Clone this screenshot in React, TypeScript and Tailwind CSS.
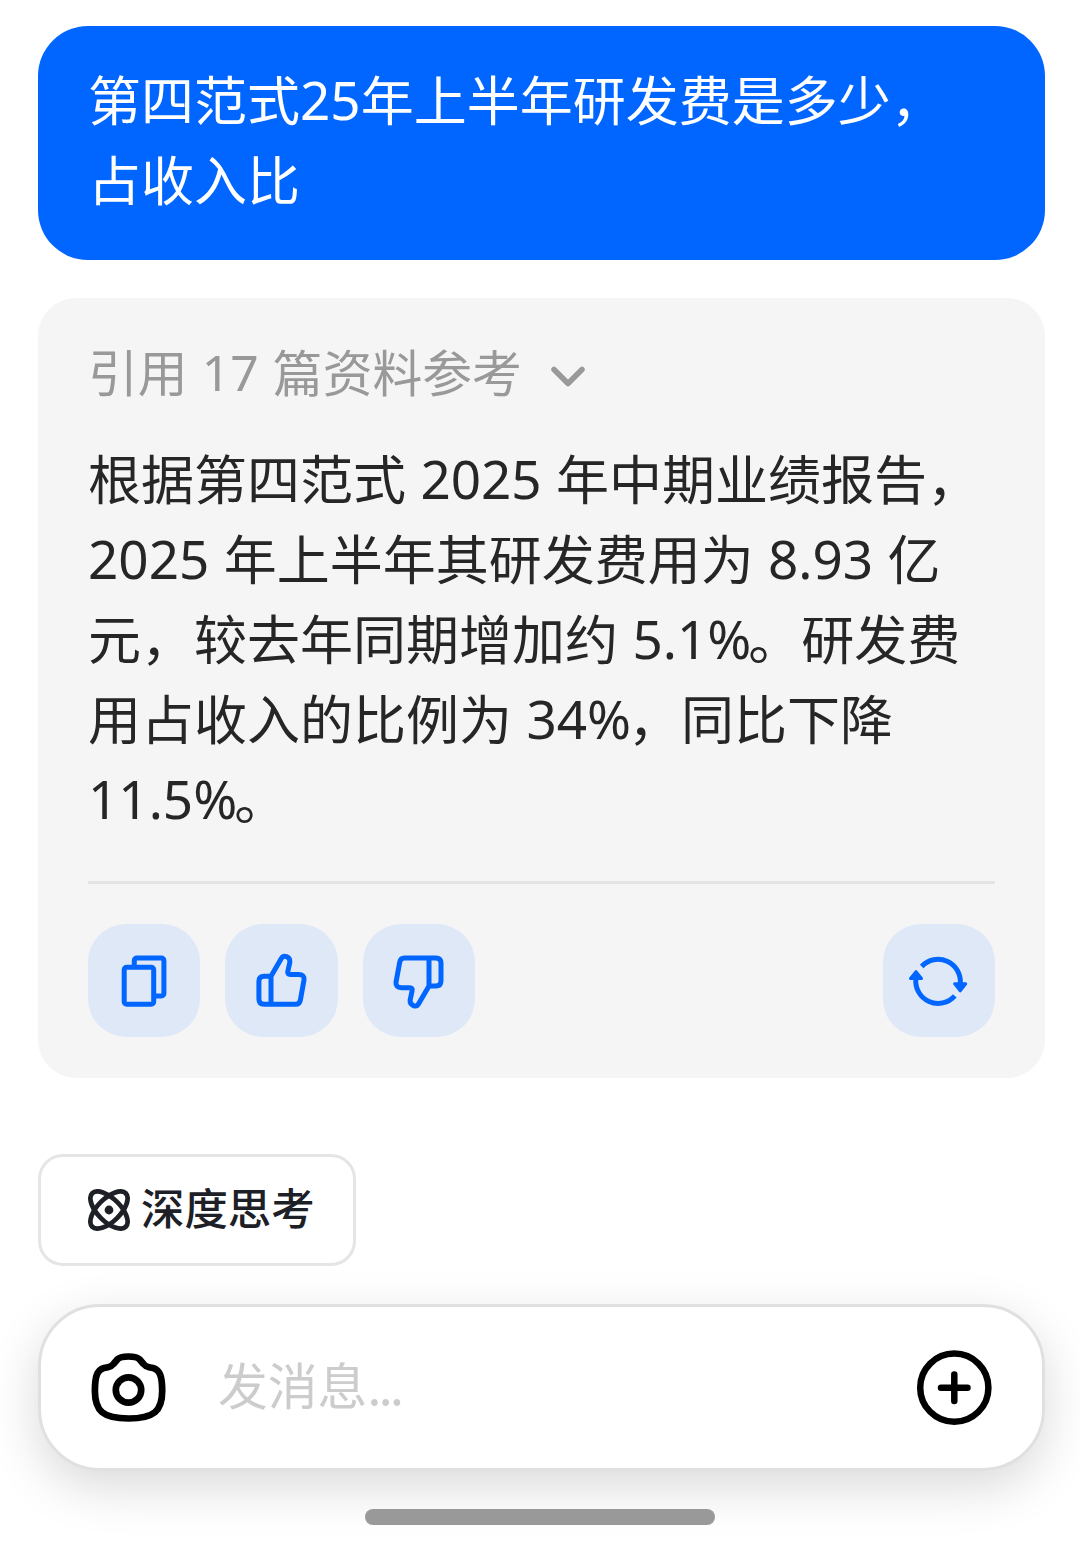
import type { ReactNode } from "react";

// Every action icon is drawn on the same grid as its 112px button
const ActionIcon = ({ children }: { children: ReactNode }) => (
  <svg
    viewBox="0 0 112 112"
    className="size-28"
    fill="none"
    stroke="currentColor"
    strokeWidth="5"
    strokeLinejoin="round"
  >
    {children}
  </svg>
);

const CopyIcon = () => (
  <ActionIcon>
    <rect x="36.2" y="42.3" width="29.5" height="37" rx="2.5" />
    <path d="M46.3 42V35.5a2.5 2.5 0 0 1 2.5-2.5H73.4a2.5 2.5 0 0 1 2.5 2.5V68.5a2.5 2.5 0 0 1-2.5 2.5H66" />
  </ActionIcon>
);

const LikeIcon = () => (
  <ActionIcon>
    <path d="M45 51.3V79.3M45 51.3L55.3 33.4C57.6 29.3 64.2 31.5 63.9 37L61.8 46.5Q61.2 49.5 64.2 49.5H72.7Q78.7 49.5 78 55L74.4 75Q73.6 79.3 69.7 79.3H38.2Q32.9 79.3 32.9 74V56.5Q32.9 51.3 38.2 51.3Z" />
  </ActionIcon>
);

const DislikeIcon = () => (
  <ActionIcon>
    <path d="M66 61V33M66 61L55.6 78.8C53.3 82.9 46.8 80.7 47.1 75.2L49.1 65.7Q49.8 62.7 46.8 62.7H38.4Q32.5 62.7 33 57.2L36.7 37.3Q37.5 33 41.4 33H72.8Q78 33 78 38.3V55.8Q78 61 72.8 61Z" />
  </ActionIcon>
);

const RefreshIcon = () => (
  <ActionIcon>
    <path d="M38.7 41.5A22.3 22.3 0 0 1 77.3 58.5" />
    <path d="M71.8 70.8A22.3 22.3 0 0 1 32.9 53.5" />
    <path d="M71.7 58.8H82.7L77.2 65.9Z" fill="currentColor" strokeWidth="3" />
    <path d="M27.5 53.5H38.5L33 46.7Z" fill="currentColor" strokeWidth="3" />
  </ActionIcon>
);

const ActionButton = ({
  label,
  children,
}: {
  label: string;
  children: ReactNode;
}) => (
  <button
    aria-label={label}
    className="flex size-[112.4px] items-center justify-center rounded-[38px] bg-[#dfe8f7] text-[#0066ff]"
  >
    {children}
  </button>
);

// Figures come from the Latin face so that "1" has no foot
const Num = ({ children }: { children: ReactNode }) => (
  <span className="align-[1px] font-['Noto_Sans',sans-serif] leading-none">
    {children}
  </span>
);

const Percent = () => <span className="tracking-[-3px]">%</span>;

const UserMessage = () => (
  <section className="h-[234px] rounded-[50px] bg-[#0066ff] px-[50px] pt-8 text-[53px] leading-[80px] whitespace-nowrap text-white">
    <p>
      第四范式<Num>25</Num>年上半年研发费是多少，
    </p>
    <p>占收入比</p>
  </section>
);

const Answer = () => (
  <section className="mt-[38px] h-[780px] rounded-[38px] bg-[#f5f5f5] px-[50px] pt-8">
    <button className="flex h-20 items-center text-[49.8px] whitespace-nowrap text-[#999999]">
      <span className="[word-spacing:3px]">
        引用 <Num>17</Num> 篇资料参考
      </span>
      <svg
        viewBox="0 0 36 24"
        className="mt-3.5 ml-[28.5px] h-6 w-9"
        fill="none"
        stroke="currentColor"
        strokeWidth="5.5"
        strokeLinecap="round"
        strokeLinejoin="round"
      >
        <path d="M4 4.5L18 18.5L32 4.5" />
      </svg>
    </button>

    <div className="mt-[27px] text-[53px] leading-[80px] [word-spacing:2.5px] whitespace-nowrap text-[#262626]">
      <p>
        根据第四范式 <Num>2025</Num> 年中期业绩报告，
      </p>
      <p>
        <Num>2025</Num> 年上半年其研发费用为 <Num>8.93</Num> 亿
      </p>
      <p>
        元，较去年同期增加约{" "}
        <Num>
          5.1
          <Percent />
        </Num>
        。研发费
      </p>
      <p>
        用占收入的比例为{" "}
        <Num>
          34
          <Percent />
        </Num>
        ，同比下降
      </p>
      <p>
        <Num>
          11.5
          <Percent />
        </Num>
        。
      </p>
    </div>

    <hr className="mt-11 border-t-[3px] border-[#e4e4e4]" />

    <div className="mt-[40.4px] flex justify-between">
      <div className="flex gap-[25px]">
        <ActionButton label="复制">
          <CopyIcon />
        </ActionButton>
        <ActionButton label="赞">
          <LikeIcon />
        </ActionButton>
        <ActionButton label="踩">
          <DislikeIcon />
        </ActionButton>
      </div>
      <ActionButton label="重新生成">
        <RefreshIcon />
      </ActionButton>
    </div>
  </section>
);

const ThinkingToggle = () => (
  <button className="mt-[76px] flex h-28 w-[318px] items-center rounded-[25px] border-3 border-[#e5e5e5] bg-white pl-[47px] text-[43.4px] font-medium whitespace-nowrap text-[#1d2026]">
    <svg
      viewBox="0 0 42 42"
      className="size-[42px] shrink-0"
      fill="none"
      stroke="currentColor"
      strokeWidth="4.7"
    >
      <ellipse cx="21" cy="21" rx="23.7" ry="11.4" transform="rotate(45 21 21)" />
      <ellipse cx="21" cy="21" rx="23.7" ry="11.4" transform="rotate(-45 21 21)" />
      <circle cx="21" cy="21" r="4.4" fill="currentColor" stroke="none" />
    </svg>
    <span className="ml-[11px] pb-[6px]">深度思考</span>
  </button>
);

const MessageInput = () => (
  <div className="mt-[38px] flex h-[167px] items-center rounded-[62px] border-3 border-[#e0e0e0] bg-white px-[50px] shadow-[0_16px_50px_rgba(0,0,0,0.15)]">
    <svg
      viewBox="0 0 76 76"
      className="size-[76px] shrink-0 text-black"
      fill="none"
      stroke="currentColor"
      strokeWidth="6.7"
    >
      <path d="M26.5 9.3Q29 6.5 37.5 6.5Q46 6.5 48.5 9.3L52.5 14Q54.5 16.5 58 17.2L62 18C69.5 20 71.2 28 71.2 41C71.2 61 63 68.5 37.5 68.5C12 68.5 3.9 61 3.9 41C3.9 28 5.5 20 13 18L17 17.2Q20.5 16.5 22.5 14Z" />
      <circle cx="37.5" cy="40" r="12.7" />
    </svg>
    <span className="ml-[51px] flex-1 pb-[8px] text-[49.8px] whitespace-nowrap text-[#cccccc]">
      发消息<span className="tracking-[-2.5px]">...</span>
    </span>
    <svg
      viewBox="0 0 76 76"
      className="size-[76px] shrink-0 text-black"
      fill="none"
      stroke="currentColor"
      strokeWidth="6.5"
      strokeLinecap="round"
    >
      <circle cx="38.3" cy="37.7" r="34.1" />
      <path d="M38.3 24.5V51M25 37.7H51.5" />
    </svg>
  </div>
);

const App = () => {
  return (
    <main
      lang="zh-CN"
      className="flex h-[1542px] w-[1080px] flex-col overflow-hidden bg-white pt-[26px] pr-[35px] pl-[38px] font-['Noto_Sans_CJK_SC',sans-serif]"
    >
      <UserMessage />
      <Answer />
      <ThinkingToggle />
      <MessageInput />
      {/* Home indicator */}
      <div className="relative mt-[38px] ml-[327px] h-4 w-[350px] rounded-full bg-[#999999]" />
    </main>
  );
};

export default App;
